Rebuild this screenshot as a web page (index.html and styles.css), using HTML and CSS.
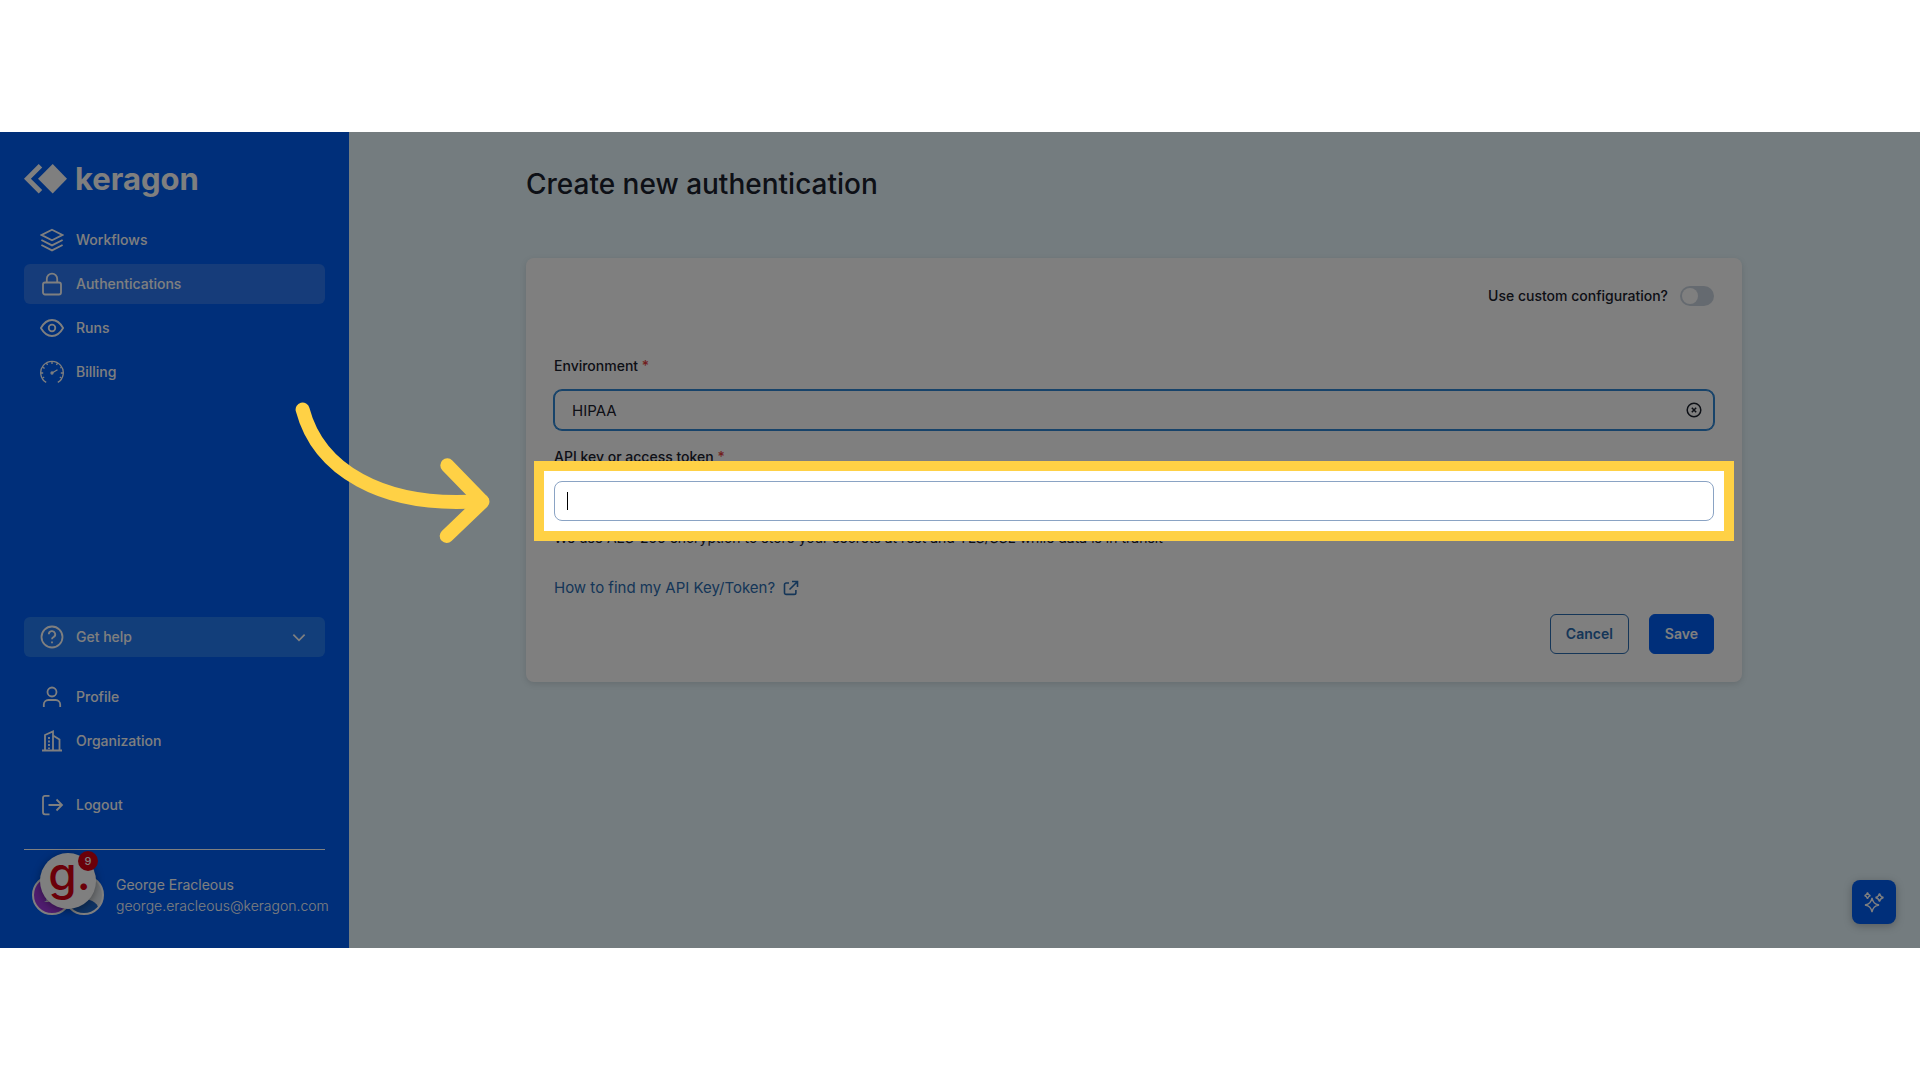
FILE: index.html
```html
<!DOCTYPE html>
<html lang="en">
<head>
<meta charset="UTF-8" />
<meta name="viewport" content="width=device-width, initial-scale=1" />
<title>Create new authentication</title>
<link rel="stylesheet" href="styles.css">
</head>
<body>

<div class="app">
    <!-- Sidebar -->
    <aside class="sidebar">
        <a class="logo" href="#">
            <svg width="43" height="30" viewBox="0 0 43 30" fill="currentColor">
                <path d="M14.7 0 18.2 3.5 6.9 14.7 18.2 26 14.7 29.4 0 14.7z"/>
                <path d="M28.7 0 43 14.7 28.7 29.4 14 14.7z"/>
            </svg>
            <span>keragon</span>
        </a>

        <nav class="nav">
            <a class="nav-item" href="#">
                <svg class="icon" viewBox="0 0 24 24"><path d="M12 1.8 22.3 7 12 12.2 1.7 7z"/><path d="M1.4 12 12 17.4 22.6 12M1.4 17 12 22.4 22.6 17"/></svg>
                Workflows
            </a>
            <a class="nav-item active" href="#">
                <svg class="icon" viewBox="0 0 24 24"><rect x="3" y="10.5" width="18" height="12" rx="2"/><path d="M6.8 10.5V6.8a5.2 5.2 0 0 1 10.4 0v3.7"/></svg>
                Authentications
            </a>
            <a class="nav-item" href="#">
                <svg class="icon" viewBox="0 0 24 24"><path d="M.9 12C4 6.5 8 4 12 4s8 2.5 11.1 8C20 17.5 16 20 12 20S4 17.5.9 12z"/><circle cx="12" cy="12" r="3.3"/></svg>
                Runs
            </a>
            <a class="nav-item" href="#">
                <svg class="icon thin" viewBox="0 0 24 24"><path d="M6.2 22.4A11.300 11.300 0 1 1 17.800 22.400"/><path d="M12 1.500v2.500M6.500 3l1 2M17.500 3l-1 2M2.600 7.300l2 1.100M21.400 7.300l-1 .5M1 13h2.200M20.800 13H23M2.500 18l1.700-.8M21.500 18l-1.700-.8M12 13l5.500-3.200"/><circle cx="12" cy="13" r="1"/></svg>
                Billing
            </a>
        </nav>

        <div class="sidebar-bottom">
            <button class="nav-item help" type="button">
                <svg class="icon" viewBox="0 0 24 24"><circle cx="12" cy="12" r="10.5"/><path d="M8.800 9.300a3.200 3.200 0 1 1 4.700 2.800c-1 .5-1.500 1-1.500 2.200"/><path d="M12 16.500v1.800"/></svg>
                Get help
                <svg class="chevron" viewBox="0 0 12 8"><path d="M1 1.500l5 5 5-5"/></svg>
            </button>

            <nav class="nav">
                <a class="nav-item" href="#">
                    <svg class="icon" viewBox="0 0 24 24"><circle cx="12" cy="7" r="4.5"/><path d="M3.800 22v-2.500a4.500 4.500 0 0 1 4.500-4.500h7.400a4.500 4.500 0 0 1 4.500 4.500V22"/></svg>
                    Profile
                </a>
                <a class="nav-item" href="#">
                    <svg class="icon" viewBox="0 0 24 24"><path d="M2 21.500h20M5 21.500V6l8-3.500v19M13 6.500l6.500 4v11"/><path d="M9 8v12" stroke-dasharray="2 1.5"/></svg>
                    Organization
                </a>
            </nav>

            <a class="nav-item" href="#">
                <svg class="icon" viewBox="0 0 24 24"><path d="M9.500 2.800H5A2 2 0 0 0 3 4.800v14.500a2 2 0 0 0 2 2h4.500M8.500 12h13M16.500 6.500 22 12l-5.500 5.500"/></svg>
                Logout
            </a>

            <div class="user">
                <div class="avatars">
                    <span class="avatar purple">N</span>
                    <span class="avatar person">
                        <svg viewBox="0 0 36 36"><circle cx="18" cy="13" r="9" fill="#fff"/><ellipse cx="18" cy="34" rx="15" ry="12" fill="#1c66c8"/></svg>
                    </span>
                    <span class="widget">g.<span class="badge">9</span></span>
                </div>
                <div class="user-info">
                    <div>George Eracleous</div>
                    <div class="email">george.eracleous@keragon.com</div>
                </div>
            </div>
        </div>
    </aside>

    <!-- Main content -->
    <main class="main">
        <div class="content">
            <h1>Create new authentication</h1>

            <form class="card">
                <div class="config-row">
                    <label for="custom-config">Use custom configuration?</label>
                    <input class="switch" type="checkbox" id="custom-config">
                </div>

                <div class="field">
                    <label for="environment">Environment <span class="required">*</span></label>
                    <div class="input-wrap">
                        <input class="input focused" type="text" id="environment" value="HIPAA">
                        <button class="clear" type="button" aria-label="Clear">
                            <svg viewBox="0 0 16 16"><circle cx="8" cy="8" r="6.8"/><path d="M5.800 5.800l4.400 4.400M10.200 5.800l-4.400 4.400"/></svg>
                        </button>
                    </div>
                </div>

                <div class="field">
                    <label for="api-key">API key or access token <span class="required">*</span></label>
                    <div class="input-wrap">
                        <input class="input" type="text" id="api-key">
                        <span class="caret"></span>
                        <!-- the shadow of the highlight dims the rest of the app -->
                        <div class="highlight">
                            <svg class="arrow" width="204" height="152" viewBox="0 0 204 152"><path d="M12.600 13.500C28 72 90 113 192 105"/><path d="M157.300 69.300 192.500 105.700 156.700 140"/></svg>
                        </div>
                    </div>
                    <p class="hint">We use AES-256 encryption to store your secrets at rest and TLS/SSL while data is in transit</p>
                </div>

                <a class="how-to" href="#">
                    How to find my API Key/Token?
                    <svg viewBox="0 0 16 16"><path d="M6 3H3.200A1.700 1.700 0 0 0 1.500 4.700v8A1.700 1.700 0 0 0 3.200 14.400h8a1.700 1.700 0 0 0 1.700-1.700V10M9 1.500h5.500V7M14.300 1.700 6.500 9.500"/></svg>
                </a>

                <div class="actions">
                    <button class="btn outline" type="button">Cancel</button>
                    <button class="btn solid" type="submit">Save</button>
                </div>
            </form>
        </div>

        <button class="assistant" type="button" aria-label="Assistant">
            <svg viewBox="0 0 24 24"><path d="M10 8c1 4.500 2.500 6 7 7-4.500 1-6 2.500-7 7-1-4.500-2.500-6-7-7 4.500-1 6-2.500 7-7z"/><path d="M17.500 3.500c.6 2.500 1.500 3.400 4 4-2.500.6-3.400 1.500-4 4-.6-2.500-1.500-3.400-4-4 2.500-.6 3.400-1.500 4-4z"/><path d="M5.500 2.500c.4 2 1.200 2.800 3 3.200-1.800.4-2.600 1.200-3 3.200-.4-2-1.200-2.800-3-3.200 1.800-.4 2.600-1.200 3-3.200z"/></svg>
        </button>
    </main>
</div>

</body>
</html>
```

FILE: styles.css
```css
* {
    box-sizing: border-box;
}
body {
    margin: 0;
    padding: 132px 0;
    min-height: 100vh;
    display: flex;
    background: #fff;
    font-family: Inter, "Liberation Sans", sans-serif;
    font-size: 14px;
    line-height: 20px;
    color: #1a202c;
}
a {
    color: inherit;
    text-decoration: none;
}
button, input {
    font-family: inherit;
    margin: 0;
}
button {
    cursor: pointer;
}
.app {
    flex: 1;
    display: flex;
    position: relative;
    overflow: hidden;
    min-width: 0;
}

/* Sidebar */
.sidebar {
    width: 349px;
    flex-shrink: 0;
    padding: 32px 24px;
    display: flex;
    flex-direction: column;
    background: #005ef4;
    color: #fff;
}
.logo {
    display: flex;
    align-items: center;
    gap: 8px;
    height: 30px;
    margin-bottom: 26px;
    font-size: 31px;
    font-weight: 700;
}
.nav {
    display: flex;
    flex-direction: column;
    gap: 4px;
}
.nav-item {
    display: flex;
    align-items: center;
    gap: 12px;
    width: 100%;
    height: 40px;
    padding: 0 16px;
    border: none;
    border-radius: 6px;
    background: none;
    color: #fff;
    font-size: 14px;
    font-weight: 500;
    line-height: 20px;
    text-align: left;
}
.nav-item.active {
    background: #2c79f4;
}
.nav-item.help {
    background: #257df4;
}
.icon {
    width: 24px;
    height: 24px;
    fill: none;
    stroke: currentColor;
    stroke-width: 1.8;
}
.icon.thin {
    stroke-width: 1.3;
}
.chevron {
    width: 14px;
    height: 9px;
    margin-left: auto;
    margin-right: 3px;
    fill: none;
    stroke: currentColor;
    stroke-width: 1.5;
}
.sidebar-bottom {
    margin-top: auto;
}
.sidebar-bottom .nav {
    margin: 20px 0 24px;
}
.user {
    display: flex;
    align-items: center;
    gap: 12px;
    margin-top: 24px;
    padding: 24px 0 0 8px;
    border-top: 1px solid #fff;
    line-height: 21px;
}
.email {
    font-weight: 300;
}
.avatars {
    position: relative;
    display: flex;
    flex-shrink: 0;
}
.avatar {
    width: 40px;
    height: 40px;
    border: 2px solid #fff;
    border-radius: 50%;
    overflow: hidden;
    text-align: center;
    line-height: 36px;
}
.avatar + .avatar {
    margin-left: -8px;
}
.avatar.purple {
    background: #a03ae0;
    font-family: "Liberation Serif", serif;
    font-size: 22px;
}
.avatar.person {
    background: #e4e9ee;
}
.widget {
    position: absolute;
    left: 8px;
    bottom: 6px;
    width: 56px;
    height: 56px;
    padding-left: 3px;
    border-radius: 50%;
    background: #fff;
    box-shadow: 0 2px 8px rgba(0,0,0,0.4);
    color: #d60012;
    font-size: 46px;
    font-weight: 500;
    line-height: 40px;
    text-align: center;
}
.badge {
    position: absolute;
    top: -2px;
    right: -2px;
    width: 20px;
    height: 20px;
    border-radius: 50%;
    background: #d60012;
    color: #fff;
    font-size: 11px;
    line-height: 20px;
}

/* Main */
.main {
    flex: 1;
    min-width: 0;
    padding: 34px 25px 34px 24px;
    background: #e8f8fe;
}
.content {
    max-width: 1216px;
    margin: 0 auto;
}
h1 {
    margin: 0 0 56px;
    font-size: 28px;
    font-weight: 500;
    line-height: 36px;
}
.card {
    padding: 28px;
    border-radius: 8px;
    background: #fff;
    box-shadow: 0 2px 6px rgba(0,0,0,0.12);
}
.config-row {
    display: flex;
    justify-content: flex-end;
    align-items: center;
    gap: 12px;
    margin-bottom: 50px;
    font-weight: 500;
}
.switch {
    appearance: none;
    width: 34px;
    height: 20px;
    padding: 2px;
    border-radius: 10px;
    background: #cbd5e0;
}
.switch::before {
    content: "";
    display: block;
    width: 16px;
    height: 16px;
    border-radius: 50%;
    background: #fff;
}
.switch:checked {
    background: #005ef4;
}
.switch:checked::before {
    margin-left: 14px;
}
.field label {
    display: block;
    margin: 17px 0 14px;
    font-weight: 500;
}
.required {
    color: #e53e3e;
}
.input-wrap {
    position: relative;
}
.input {
    display: block;
    width: 100%;
    height: 40px;
    padding: 0 17px;
    border: 1px solid #8aa3c4;
    border-radius: 8px;
    background: #fff;
    color: #1a202c;
    font-size: 15px;
    outline: none;
}
.input.focused {
    border-color: #2f86d4;
    box-shadow: 0 0 0 1px #2f86d4;
}
.clear {
    position: absolute;
    top: 12px;
    right: 12px;
    width: 16px;
    height: 16px;
    padding: 0;
    border: none;
    background: none;
}
.clear svg {
    display: block;
    fill: none;
    stroke: #1a202c;
    stroke-width: 1.5;
}
.caret {
    position: absolute;
    top: 11px;
    left: 13px;
    width: 1px;
    height: 18px;
    background: #000;
}
.highlight {
    position: absolute;
    inset: -20px;
    z-index: 10;
    border: 10px solid #ffd145;
    box-shadow: 0 0 0 4000px rgba(0,0,0,0.5);
    pointer-events: none;
}
.arrow {
    position: absolute;
    top: -75px;
    right: calc(100% + 50px);
    fill: none;
    stroke: #ffd145;
    stroke-width: 14;
    stroke-linecap: round;
    stroke-linejoin: round;
}
.hint {
    margin: 7px 0 28px;
}
.how-to {
    display: inline-flex;
    align-items: center;
    gap: 8px;
    font-size: 15px;
    line-height: 24px;
    color: #2b6cb0;
}
.how-to svg {
    width: 16px;
    height: 16px;
    fill: none;
    stroke: currentColor;
    stroke-width: 1.6;
}
.actions {
    display: flex;
    justify-content: flex-end;
    gap: 20px;
    margin-top: 14px;
}
.btn {
    height: 40px;
    padding: 0 15px;
    border: 1px solid #005ef4;
    border-radius: 6px;
    font-size: 14px;
    font-weight: 600;
    line-height: 20px;
}
.btn.outline {
    border-color: #2b6cb0;
    background: #fff;
    color: #2b6cb0;
}
.btn.solid {
    background: #005ef4;
    color: #fff;
}
.assistant {
    position: absolute;
    right: 24px;
    bottom: 24px;
    width: 44px;
    height: 44px;
    padding: 10px;
    border: none;
    border-radius: 8px;
    background: #005ef4;
    box-shadow: 0 2px 8px rgba(0,0,0,0.25);
}
.assistant svg {
    display: block;
    fill: none;
    stroke: #fff;
    stroke-width: 1.3;
}
```
